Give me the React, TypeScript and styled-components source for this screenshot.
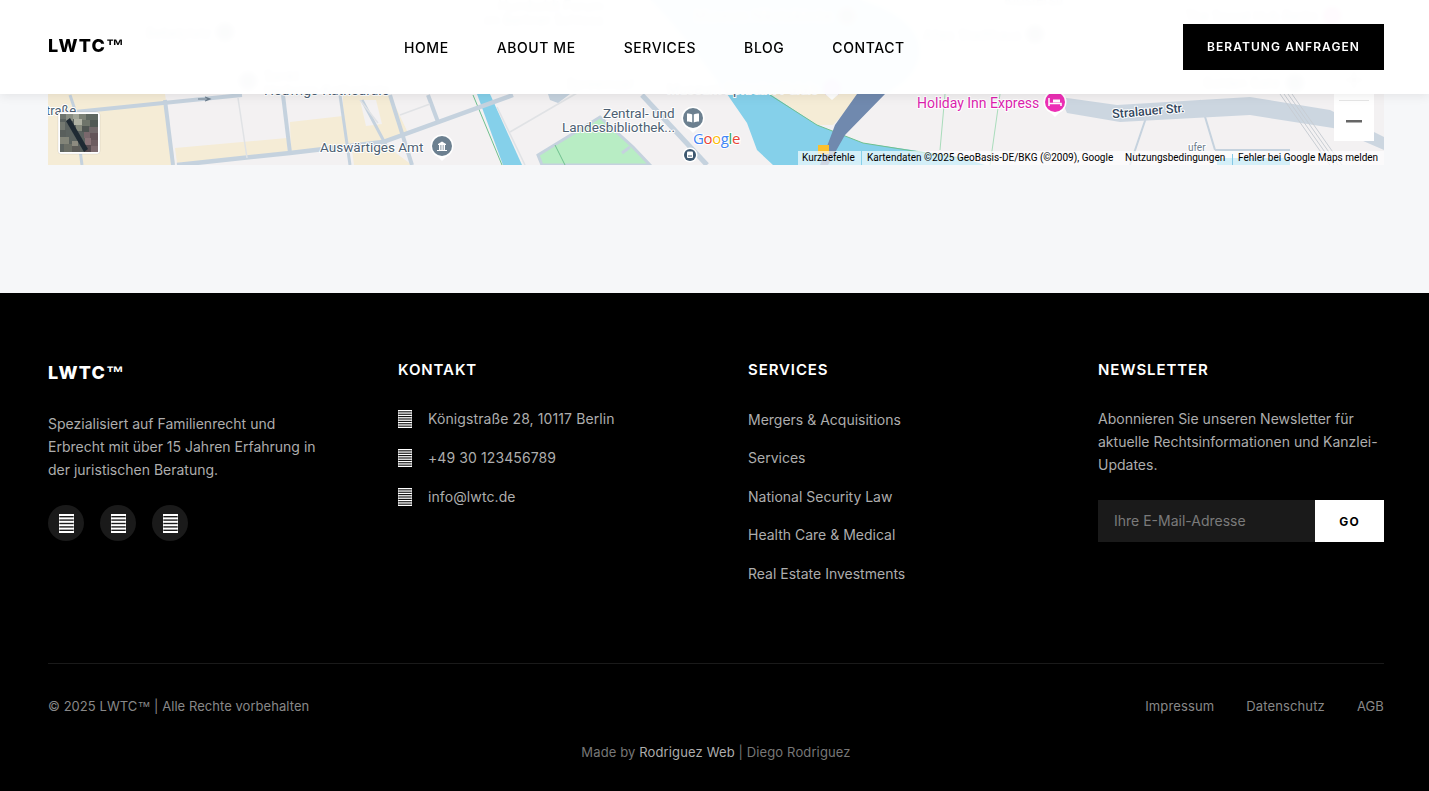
import React from "react";
import styled, { createGlobalStyle } from "styled-components";

const Global = createGlobalStyle`
  * { box-sizing: border-box; }
  html, body { margin: 0; padding: 0; background: #f6f7f9; }
  body { font-family: Inter, "Liberation Sans", sans-serif; -webkit-font-smoothing: antialiased; }
  a { color: inherit; text-decoration: none; }
`;

const Page = styled.div`
  width: 100%;
  min-height: 791px;
  overflow: hidden;
`;

const Header = styled.header`
  position: fixed;
  top: 0;
  left: 0;
  right: 0;
  height: 94px;
  padding: 0 45px 0 48px;
  display: flex;
  align-items: center;
  background: rgba(255, 255, 255, 0.975);
  backdrop-filter: blur(2px);
  box-shadow: 0 2px 10px rgba(0, 0, 0, 0.08);
  z-index: 10;
`;

const Logo = styled.div<{ $light?: boolean }>`
  font-size: 18px;
  line-height: 22px;
  font-weight: 800;
  letter-spacing: 1.2px;
  color: ${(p) => (p.$light ? "#fff" : "#000")};
`;

const TradeMark = styled.span`
  font-family: "Liberation Sans", sans-serif;
  letter-spacing: 0;
`;

const HeaderLogo = styled(Logo)`
  width: 356px;
  margin-top: -2px;
`;

const FooterLogo = styled(Logo)`
  margin-top: 5px;
`;

const Nav = styled.nav`
  display: flex;
  gap: 48px;
  flex: 1;
  margin-top: 2px;
`;

const NavLink = styled.a`
  font-size: 14px;
  line-height: 20px;
  font-weight: 500;
  letter-spacing: 0.58px;
  color: #000;
`;

const CtaButton = styled.button`
  width: 201px;
  height: 46px;
  border: 0;
  background: #000;
  color: #fff;
  font-family: inherit;
  font-size: 12px;
  font-weight: 600;
  letter-spacing: 1.06px;
  padding: 0 0 2px;
`;

const MapSection = styled.section`
  padding: 0 45px 128px 48px;
`;

const MapFrame = styled.div`
  height: 165px;
  overflow: hidden;
`;

const MapSvg = styled.svg`
  display: block;
  width: 100%;
  height: 165px;
`;

const Footer = styled.footer`
  background: #000;
  height: 498px;
  padding: 64px 45px 0 48px;
`;

const Columns = styled.div`
  display: grid;
  grid-template-columns: repeat(4, 286px);
  column-gap: 64px;
  height: 307px;
  border-bottom: 1px solid #1a1a1a;
`;

const Column = styled.div``;

const BrandText = styled.p`
  margin: 28px 0 0;
  font-size: 14px;
  line-height: 23px;
  color: #adadad;
`;

const Socials = styled.div`
  display: flex;
  gap: 16px;
  margin-top: 24px;
`;

const SocialCircle = styled.a`
  width: 36px;
  height: 36px;
  border-radius: 50%;
  background: #1a1a1a;
  display: flex;
  align-items: center;
  justify-content: center;
`;

const Heading = styled.h3`
  margin: 1px 0 -1px;
  font-size: 15px;
  line-height: 24px;
  font-weight: 600;
  letter-spacing: 0.9px;
  color: #fff;
`;

const ContactList = styled.div`
  margin-top: 26px;
  display: flex;
  flex-direction: column;
  gap: 16px;
`;

const ContactRow = styled.div`
  height: 23px;
  display: flex;
  align-items: center;
  gap: 16px;
  font-size: 14px;
  letter-spacing: 0.1px;
  color: #adadad;
`;

const ServiceList = styled.div`
  margin-top: 26.6px;
  display: flex;
  flex-direction: column;
  gap: 15.5px;
`;

const ServiceLink = styled.a`
  display: block;
  font-size: 14px;
  line-height: 23px;
  color: #adadad;
`;

const NewsText = styled.p`
  margin: 26px 0 0;
  font-size: 14px;
  line-height: 23px;
  color: #adadad;
`;

const NewsForm = styled.div`
  display: flex;
  margin-top: 24px;
  height: 42px;
`;

const EmailInput = styled.input`
  width: 217px;
  border: 0;
  outline: 0;
  padding: 0 16px 2px;
  background: #1a1a1a;
  color: #fff;
  font-family: inherit;
  font-size: 14px;
  &::placeholder { color: #7a7a7a; opacity: 1; }
`;

const GoButton = styled.button`
  flex: 1;
  border: 0;
  background: #fff;
  color: #000;
  font-family: inherit;
  font-size: 12px;
  font-weight: 700;
  letter-spacing: 1.2px;
`;

const BottomRow = styled.div`
  margin-top: 32px;
  display: flex;
  justify-content: space-between;
  font-size: 13px;
  line-height: 20px;
  letter-spacing: 0.13px;
  color: #888;
`;

const Copyright = styled.span`
  letter-spacing: 0.05px;
`;

const LegalLinks = styled.div`
  display: flex;
  gap: 32px;
`;

const Credit = styled.div`
  margin-top: 25px;
  text-align: center;
  font-size: 13px;
  line-height: 20px;
  letter-spacing: 0.13px;
  color: #777;
`;

const CreditName = styled.a`
  color: #adadad;
`;

const Stripes = ({ w = 14, h = 18, n = 8, t = 1.3 }: { w?: number; h?: number; n?: number; t?: number }) => (
  <svg width={w} height={h} viewBox={`0 0 ${w} ${h}`} aria-hidden="true">
    {Array.from({ length: n }).map((_, i) => (
      <rect key={i} x="0" y={(i * (h - t)) / (n - 1)} width={w} height={t} fill="#fff" />
    ))}
    <rect x="0" y="0" width="0.7" height={h} fill="#fff" opacity="0.5" />
    <rect x={w - 0.7} y="0" width="0.7" height={h} fill="#fff" opacity="0.5" />
  </svg>
);

const MapText = styled.text<{ $c?: string; $s?: number; $w?: number; $i?: boolean }>`
  font-family: Roboto, sans-serif;
  font-size: ${(p) => p.$s ?? 14}px;
  font-weight: ${(p) => p.$w ?? 400};
  font-style: ${(p) => (p.$i ? "italic" : "normal")};
  fill: ${(p) => p.$c ?? "#4d5f73"};
  paint-order: stroke;
  stroke: #fff;
  stroke-width: 2px;
  stroke-linejoin: round;
`;

const AttrText = styled.text`
  font-family: Roboto, sans-serif;
  font-size: 10px;
  fill: #000;
`;

const GoogleText = styled.text`
  font-family: "Open Sans", sans-serif;
  font-size: 15px;
  font-weight: 500;
  letter-spacing: -0.4px;
  paint-order: stroke;
  stroke: #fff;
  stroke-width: 2px;
`;

const road = "#c5d2de";
const thin = "#e0e2e5";
const park = "#6fc08e";
const beige = "#f5ecd6";

const Pin = ({ x, y, c, r = 11 }: { x: number; y: number; c: string; r?: number }) => (
  <g>
    <circle cx={x} cy={y} r={r + 1.5} fill="#fff" />
    <path d={`M${x - 6} ${y + r - 1}L${x} ${y + r + 5}L${x + 6} ${y + r - 1}z`} fill="#fff" />
    <circle cx={x} cy={y} r={r} fill={c} />
  </g>
);

const satellite: [number, number, number, number, string][] = [
  [60, 114, 6, 5, "#6f756e"], [66, 114, 7, 7, "#8a8f84"], [73, 114, 6, 5, "#a2a698"], [79, 114, 7, 6, "#7c8276"],
  [86, 114, 12, 6, "#5f6860"], [74, 119, 8, 6, "#b0b2a4"], [82, 120, 8, 6, "#6e746a"], [90, 120, 8, 7, "#505854"],
  [76, 125, 6, 6, "#868a7d"], [82, 126, 7, 6, "#4f5552"], [89, 127, 9, 6, "#71686a"], [60, 122, 5, 8, "#737870"],
  [60, 130, 6, 7, "#595f5c"], [84, 132, 6, 6, "#7a686c"], [90, 133, 8, 7, "#635459"], [60, 137, 9, 7, "#838579"],
  [64, 144, 8, 8, "#6c6f66"], [72, 141, 6, 5, "#8d8b80"], [72, 146, 8, 6, "#5d5c58"], [85, 138, 6, 7, "#8a7478"],
  [91, 140, 7, 6, "#6d5c60"], [84, 145, 7, 7, "#574c50"], [91, 146, 7, 6, "#7c6a6e"],
];

const MapDrawing = () => (
  <MapSvg viewBox="48 0 1336 165" preserveAspectRatio="none" role="img" aria-label="Karte">
    <rect x="48" y="0" width="1336" height="165" fill="#f3f1f2" />

    {/* river under the header */}
    <path d="M860 0C935 20 935 70 885 94H727C700 60 680 30 650 0z" fill="#85d0ea" />

    {/* beige city blocks */}
    <path d="M48 94H165L175 165H48z" fill={beige} />
    <path d="M175 148L287 138 288 153 177 163z" fill={beige} />
    <path d="M290 122L343 116V95H390L408 133 383 142 291 153z" fill={beige} />
    <path d="M360 100H376L382 124 366 126z" fill="#f3f1f2" />
    <path d="M352 150L385 145 412 165H354z" fill={beige} />
    <path d="M770 94H862L833 125 818 125z" fill={beige} />

    {/* water */}
    <path d="M727 94H770L817 125 863 143 960 157 985 165H773L757 150 747 123z" fill="#85d0ea" />
    <path d="M477 94H490L522 165H503z" fill="#85d0ea" />
    <path d="M1217 158H1290V165H1217z" fill="#85d0ea" />

    {/* park */}
    <path d="M538 155L600 117 633 147 650 165H542z" fill="#b8edc4" stroke={road} strokeWidth="3" />
    <path d="M555 145L565 165" stroke={park} strokeWidth="1" fill="none" />
    <path d="M473 95L502 165" stroke={park} strokeWidth="1" fill="none" />
    <path d="M770 95L817 125 863 143 970 160" stroke={park} strokeWidth="1" fill="none" />
    <path d="M945 94L940 150M1000 94L990 165" stroke="#a9dcbb" strokeWidth="1" fill="none" />

    {/* roads */}
    <g fill="none" strokeLinecap="butt">
      <g stroke={road}>
        <path d="M75 112L242 95" strokeWidth="4" />
        <path d="M165 100L173 165" strokeWidth="4" />
        <path d="M70 95L75 110" strokeWidth="3" />
        <path d="M80 150L82 165" strokeWidth="3" />
        <path d="M177 165L290 153 383 142 513 95" strokeWidth="4.500" />
        <path d="M283 95L290 153" strokeWidth="4" />
        <path d="M340 95L350 165" strokeWidth="3" />
        <path d="M362 100L387 147" strokeWidth="3" />
        <path d="M390 95L412 165" strokeWidth="4" />
        <path d="M428 95L438 122" strokeWidth="4" />
        <path d="M642 95L707 165" strokeWidth="5" />
        <path d="M622 153L630 147" strokeWidth="3" />
        <path d="M1150 106L1130 165M1200 100L1215 150" strokeWidth="2" />
        <path d="M1215 150H1290" strokeWidth="2" />
      </g>
      <g stroke={thin} strokeWidth="1.500">
        <path d="M238 98L247 158" />
        <path d="M400 115L430 104" />
        <path d="M497 107L525 165" />
        <path d="M510 132L577 93" />
        <path d="M360 100L378 123" />
      </g>
    </g>
    <path d="M548 94H570L558 103 550 100z" fill={road} />
    <path d="M1060 97L1117 105 1250 97 1330 110 1384 137V150L1333 128 1250 115 1120 122 1067 113z" fill="#ccd6e0" />
    <path d="M857 94H885L845 135 828 165H820L835 125z" fill="#7089ae" />
    <path d="M1280 94L1330 165M1284 94L1334 165M1288 94L1338 165M1292 94L1342 165" stroke="#c8cdd3" strokeWidth="1" fill="none" />
    <path d="M198 99H210M205 97L210 99 205 101" stroke="#6b7c8c" strokeWidth="1.200" fill="none" />
    <rect x="818" y="145" width="11" height="9" fill="#fbc02d" />

    {/* labels hidden under the header */}
    <MapText x="146" y="38">Bebelplatz</MapText>
    <circle cx="225" cy="32" r="9" fill="#6c8090" />
    <MapText x="264" y="81">Sankt</MapText>
    <MapText x="264" y="95">Hedwigs-Kathedrale</MapText>
    <circle cx="248" cy="81" r="9" fill="#6c8090" />
    <MapText x="498" y="11">Humboldt Forum</MapText>
    <MapText x="484" y="25">im Berliner Schloss</MapText>
    <MapText x="694" y="21">Museum Nikolaikirche</MapText>
    <circle cx="847" cy="16" r="9" fill="#6c8090" />
    <MapText x="667" y="94">Museum Ephraim-Palais</MapText>
    <MapText x="566" y="89" $s={15} $i>Spreeinsel</MapText>
    <MapText x="923" y="40">Altes Stadthaus</MapText>
    <circle cx="1035" cy="34" r="9" fill="#6c8090" />
    <MapText x="1004" y="5">Klosterstr.</MapText>
    <MapText x="1185" y="21">The Social Hub Berlin</MapText>
    <circle cx="1332" cy="16" r="9" fill="#e44bb8" />
    <MapText x="1203" y="88">Golden Gate</MapText>
    <circle cx="1295" cy="83" r="9" fill="#6c8090" />

    {/* labels */}
    <MapText x="46" y="115" $s={13}>traße</MapText>
    <MapText x="320" y="152" $s={13.5}>Auswärtiges Amt</MapText>
    <Pin x={442} y={146} c="#6c8090" r={10} />
    <path d="M437 151h10v-1h-10zM438 145h8v-1l-4 -2.500 -4 2.500zM439 145h1.500v5h-1.500zM441.300 145h1.500v5h-1.500zM443.500 145h1.500v5h-1.500z" fill="#fff" />
    <MapText x="603" y="118" $s={13.5}>Zentral- und</MapText>
    <MapText x="562" y="132" $s={13.5}>Landesbibliothek...</MapText>
    <Pin x={693} y={118} c="#6c8090" r={10} />
    <path d="M687 113.500c2 0 4 0 5.200 1v8c-1.500 -1 -3.500 -1 -5.200 -1zM699 113.500c-2 0 -4 0 -5.200 1v8c1.500 -1 3.500 -1 5.200 -1z" fill="#fff" />
    <circle cx="690" cy="155" r="7.500" fill="#fff" />
    <circle cx="690" cy="155" r="6" fill="#3d5870" />
    <rect x="687" y="151.500" width="6" height="6.500" rx="1" fill="#fff" />
    <rect x="688" y="155.500" width="4" height="1" fill="#3d5870" />
    <circle cx="832" cy="88" r="9" fill="#8a4fe0" />
    <path d="M825 94L832 100 839 94z" fill="#fff" />
    <MapText x="917" y="108" $s={14} $c="#dc1fae">Holiday Inn Express</MapText>
    <Pin x={1055} y={102} c="#ec2fb5" r={10} />
    <path d="M1049 98v8M1049 103.500h12v2.500" stroke="#fff" strokeWidth="1.500" fill="none" />
    <rect x="1053" y="99.500" width="7" height="3" fill="#fff" />
    <g transform="rotate(-5 1150 110)">
      <MapText x="1112" y="115" $s={12.5} $w={500} $c="#33475e">Stralauer Str.</MapText>
    </g>
    <MapText x="1188" y="151" $s={10} $c="#6b7c8c">ufer</MapText>

    {/* satellite switch */}
    <rect x="58" y="112" width="42" height="42" rx="3" fill="#fff" stroke="rgba(0,0,0,0.15)" strokeWidth="0.5" />
    <rect x="60" y="114" width="38" height="38" fill="#5c6360" />
    {satellite.map(([x, y, w, h, f], i) => (
      <rect key={i} x={x} y={y} width={w} height={h} fill={f} />
    ))}
    <path d="M66 121L70 118 88 149 84 152z" fill="#1f2a33" />

    <GoogleText x="693" y="144">
      <tspan fill="#4285f4">G</tspan>
      <tspan fill="#ea4335">o</tspan>
      <tspan fill="#fbbc05">o</tspan>
      <tspan fill="#4285f4">g</tspan>
      <tspan fill="#34a853">l</tspan>
      <tspan fill="#ea4335">e</tspan>
    </GoogleText>

    {/* zoom controls */}
    <rect x="1334" y="60" width="40" height="81" fill="#fff" />
    <rect x="1339" y="100" width="30" height="1" fill="#e6e6e6" />
    <path d="M1354 71V89M1345 80H1363" stroke="#666" strokeWidth="2" />
    <rect x="1346" y="120" width="16" height="2.500" fill="#666" />

    {/* attribution */}
    <rect x="798" y="151" width="63" height="14" fill="#fff" opacity="0.65" />
    <rect x="862" y="151" width="522" height="14" fill="#fff" opacity="0.65" />
    <AttrText x="802" y="161">Kurzbefehle</AttrText>
    <AttrText x="867" y="161">Kartendaten ©2025 GeoBasis-DE/BKG (©2009), Google</AttrText>
    <AttrText x="1125" y="161">Nutzungsbedingungen</AttrText>
    <rect x="1232" y="154" width="1" height="11" fill="#85c8e6" />
    <AttrText x="1238" y="161">Fehler bei Google Maps melden</AttrText>
  </MapSvg>
);

const contact = ["Königstraße 28, 10117 Berlin", "+49 30 123456789", "info@lwtc.de"];
const services = [
  "Mergers & Acquisitions",
  "Services",
  "National Security Law",
  "Health Care & Medical",
  "Real Estate Investments",
];

export default function App() {
  return (
    <Page>
      <Global />
      <Header>
        <HeaderLogo>LWTC<TradeMark>™</TradeMark></HeaderLogo>
        <Nav>
          {["HOME", "ABOUT ME", "SERVICES", "BLOG", "CONTACT"].map((n) => (
            <NavLink key={n} href="#">{n}</NavLink>
          ))}
        </Nav>
        <CtaButton>BERATUNG ANFRAGEN</CtaButton>
      </Header>

      <MapSection>
        <MapFrame>
          <MapDrawing />
        </MapFrame>
      </MapSection>

      <Footer>
        <Columns>
          <Column>
            <FooterLogo $light>LWTC<TradeMark>™</TradeMark></FooterLogo>
            <BrandText>
              Spezialisiert auf Familienrecht und
              <br />
              Erbrecht mit über 15 Jahren Erfahrung in
              <br />
              der juristischen Beratung.
            </BrandText>
            <Socials>
              {[0, 1, 2].map((i) => (
                <SocialCircle key={i} href="#"><Stripes w={15} h={19} n={6} t={2} /></SocialCircle>
              ))}
            </Socials>
          </Column>
          <Column>
            <Heading>KONTAKT</Heading>
            <ContactList>
              {contact.map((c) => (
                <ContactRow key={c}><Stripes />{c}</ContactRow>
              ))}
            </ContactList>
          </Column>
          <Column>
            <Heading>SERVICES</Heading>
            <ServiceList>
              {services.map((s) => (
                <ServiceLink key={s} href="#">{s}</ServiceLink>
              ))}
            </ServiceList>
          </Column>
          <Column>
            <Heading>NEWSLETTER</Heading>
            <NewsText>
              Abonnieren Sie unseren Newsletter für
              <br />
              aktuelle Rechtsinformationen und Kanzlei-
              <br />
              Updates.
            </NewsText>
            <NewsForm>
              <EmailInput placeholder="Ihre E-Mail-Adresse" />
              <GoButton>GO</GoButton>
            </NewsForm>
          </Column>
        </Columns>
        <BottomRow>
          <Copyright>© 2025 LWTC<TradeMark>™</TradeMark> | Alle Rechte vorbehalten</Copyright>
          <LegalLinks>
            <a href="#">Impressum</a>
            <a href="#">Datenschutz</a>
            <a href="#">AGB</a>
          </LegalLinks>
        </BottomRow>
        <Credit>
          Made by <CreditName href="#">Rodriguez Web</CreditName> | Diego Rodriguez
        </Credit>
      </Footer>
    </Page>
  );
}
